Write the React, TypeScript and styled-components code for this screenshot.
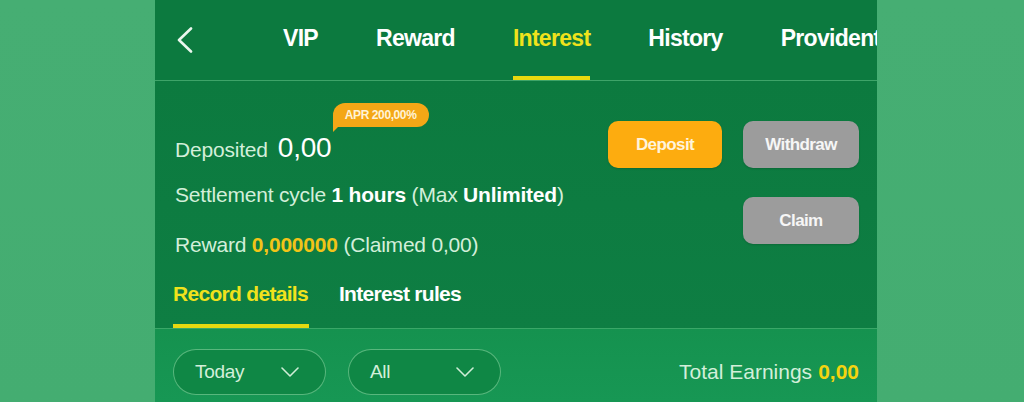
import React, { useState } from 'react';
import styled, { createGlobalStyle } from 'styled-components';

const GlobalStyle = createGlobalStyle`
  html, body {
    margin: 0;
    padding: 0;
    background: #45ad72;
    font-family: 'Liberation Sans', Arial, sans-serif;
    overflow: hidden;
  }
`;

const Page = styled.div`
  height: 402px;
  background: linear-gradient(180deg, #46ae73 0%, #44ad71 100%);
`;

const Column = styled.div`
  margin-left: 155px;
  width: 722px;
  height: 402px;
  overflow: hidden;
  display: flex;
  flex-direction: column;
`;

const Header = styled.div`
  height: 80px;
  flex: none;
  display: flex;
  align-items: center;
  background: #0c7a3f;
  border-bottom: 1px solid #3ea469;
`;

const BackButton = styled.div`
  flex: none;
  width: 128px;
  padding-left: 22px;
  box-sizing: border-box;
  display: flex;
  align-items: center;
  height: 80px;
`;

const TabRow = styled.div`
  flex: none;
  display: flex;
  gap: 58px;
  white-space: nowrap;
`;

const Tab = styled.div<{ active?: boolean }>`
  height: 80px;
  box-sizing: border-box;
  display: flex;
  align-items: center;
  font-size: 23px;
  font-weight: 700;
  letter-spacing: -0.7px;
  color: ${({ active }) => (active ? '#efe31c' : '#ffffff')};
  border-bottom: 4px solid ${({ active }) => (active ? '#e8d90f' : 'transparent')};
`;

const Content = styled.div`
  flex: none;
  background: linear-gradient(180deg, #0c7a3f 0%, #0e7e43 100%);
  padding: 0 18px 0 18px;
  border-bottom: 1px solid #3aa768;
`;

const TopArea = styled.div`
  display: flex;
  justify-content: space-between;
  align-items: flex-start;
`;

const Info = styled.div`
  padding-top: 50px;
  padding-left: 2px;
  display: flex;
  flex-direction: column;
`;

const InfoLine = styled.div<{ gap: number }>`
  margin-top: ${({ gap }) => gap}px;
  line-height: 28px;
  font-size: 21px;
  letter-spacing: -0.2px;
  color: #d3efda;
  white-space: nowrap;
`;

const DepositLine = styled.div`
  display: flex;
  align-items: baseline;
  gap: 10px;
  line-height: 34px;
  font-size: 21px;
  color: #d3efda;
  letter-spacing: -0.2px;
`;

const Amount = styled.span`
  position: relative;
  font-size: 28px;
  color: #ffffff;
`;

const AprBadge = styled.span`
  position: absolute;
  left: 55px;
  top: -28px;
  height: 24px;
  padding: 0 13px 0 12px;
  border-radius: 12px 12px 12px 0;
  background: #f4a716;
  color: #fff3d6;
  font-size: 12px;
  font-weight: 700;
  line-height: 24px;
  letter-spacing: -0.4px;
  white-space: nowrap;

  &::after {
    content: '';
    position: absolute;
    left: 0;
    bottom: -5px;
    border-top: 6px solid #f4a716;
    border-right: 6px solid transparent;
  }
`;

const Strong = styled.b<{ tone?: 'white' | 'gold' }>`
  font-weight: 700;
  color: ${({ tone }) => (tone === 'gold' ? '#f2c418' : '#ffffff')};
`;

const ButtonGrid = styled.div`
  margin-top: 40px;
  display: grid;
  grid-template-columns: 114px 116px;
  column-gap: 21px;
  row-gap: 29px;
`;

const ActionButton = styled.div<{ variant: 'orange' | 'gray'; col?: number }>`
  grid-column: ${({ col }) => col ?? 'auto'};
  height: 47px;
  border-radius: 10px;
  display: flex;
  align-items: center;
  justify-content: center;
  font-size: 17px;
  font-weight: 700;
  letter-spacing: -0.6px;
  background: ${({ variant }) => (variant === 'orange' ? '#fdac0f' : '#9c9c9c')};
  color: ${({ variant }) => (variant === 'orange' ? '#fff4dc' : '#f6f6f6')};
  box-shadow: 0 1px 2px rgba(0, 0, 0, 0.15);
`;

const SubTabs = styled.div`
  margin-top: 21px;
  display: flex;
  gap: 30px;
`;

const SubTab = styled.div<{ active?: boolean }>`
  padding: 0 1px 16px 0;
  line-height: 28px;
  font-size: 21px;
  font-weight: 700;
  letter-spacing: -0.7px;
  color: ${({ active }) => (active ? '#f0e21c' : '#ffffff')};
  border-bottom: 4px solid ${({ active }) => (active ? '#e6d911' : 'transparent')};
`;

const Bottom = styled.div`
  flex: 1;
  background: linear-gradient(180deg, #15924f 0%, #179754 100%);
  padding: 20px 18px 0 18px;
  display: flex;
  align-items: flex-start;
  justify-content: space-between;
`;

const Filters = styled.div`
  display: flex;
  gap: 22px;
`;

const Pill = styled.div`
  width: 153px;
  height: 46px;
  box-sizing: border-box;
  border-radius: 23px;
  border: 1px solid rgba(150, 222, 172, 0.55);
  background: #0f8745;
  display: flex;
  align-items: center;
  justify-content: space-between;
  padding: 0 26px 0 21px;
  font-size: 19px;
  color: #d3efda;
  letter-spacing: -0.3px;
`;

const Total = styled.div`
  height: 46px;
  display: flex;
  align-items: center;
  gap: 6px;
  font-size: 21px;
  color: #d3efda;
  letter-spacing: 0;
`;

const TotalValue = styled.b`
  color: #f5d40f;
`;

const Chevron = () => (
  <svg width="18" height="10" viewBox="0 0 18 10" fill="none">
    <path d="M1 1L9 9L17 1" stroke="#cfeed7" strokeWidth="1.6" strokeLinecap="round" strokeLinejoin="round" />
  </svg>
);

const BackIcon = () => (
  <svg width="16" height="26" viewBox="0 0 16 26" fill="none">
    <path d="M14 1.5L2 13L14 24.5" stroke="#eaf7ee" strokeWidth="2.6" strokeLinecap="round" strokeLinejoin="round" />
  </svg>
);

const tabs = ['VIP', 'Reward', 'Interest', 'History', 'Provident'];

const App: React.FC = () => {
  const [active, setActive] = useState('Interest');
  const [sub, setSub] = useState('record');

  return (
    <Page>
      <GlobalStyle />
      <Column>
        <Header>
          <BackButton>
            <BackIcon />
          </BackButton>
          <TabRow>
            {tabs.map((t) => (
              <Tab key={t} active={t === active} onClick={() => setActive(t)}>
                {t}
              </Tab>
            ))}
          </TabRow>
        </Header>

        <Content>
          <TopArea>
            <Info>
              <DepositLine>
                <span>Deposited</span>
                <Amount>
                  0,00
                  <AprBadge>APR 200,00%</AprBadge>
                </Amount>
              </DepositLine>
              <InfoLine gap={14}>
                Settlement cycle <Strong>1 hours</Strong> (Max <Strong>Unlimited</Strong>)
              </InfoLine>
              <InfoLine gap={22}>
                Reward <Strong tone="gold">0,000000</Strong> (Claimed 0,00)
              </InfoLine>
            </Info>
            <ButtonGrid>
              <ActionButton variant="orange">Deposit</ActionButton>
              <ActionButton variant="gray">Withdraw</ActionButton>
              <ActionButton variant="gray" col={2}>
                Claim
              </ActionButton>
            </ButtonGrid>
          </TopArea>
          <SubTabs>
            <SubTab active={sub === 'record'} onClick={() => setSub('record')}>
              Record details
            </SubTab>
            <SubTab active={sub === 'rules'} onClick={() => setSub('rules')}>
              Interest rules
            </SubTab>
          </SubTabs>
        </Content>

        <Bottom>
          <Filters>
            <Pill>
              <span>Today</span>
              <Chevron />
            </Pill>
            <Pill>
              <span>All</span>
              <Chevron />
            </Pill>
          </Filters>
          <Total>
            Total Earnings <TotalValue>0,00</TotalValue>
          </Total>
        </Bottom>
      </Column>
    </Page>
  );
};

export default App;
